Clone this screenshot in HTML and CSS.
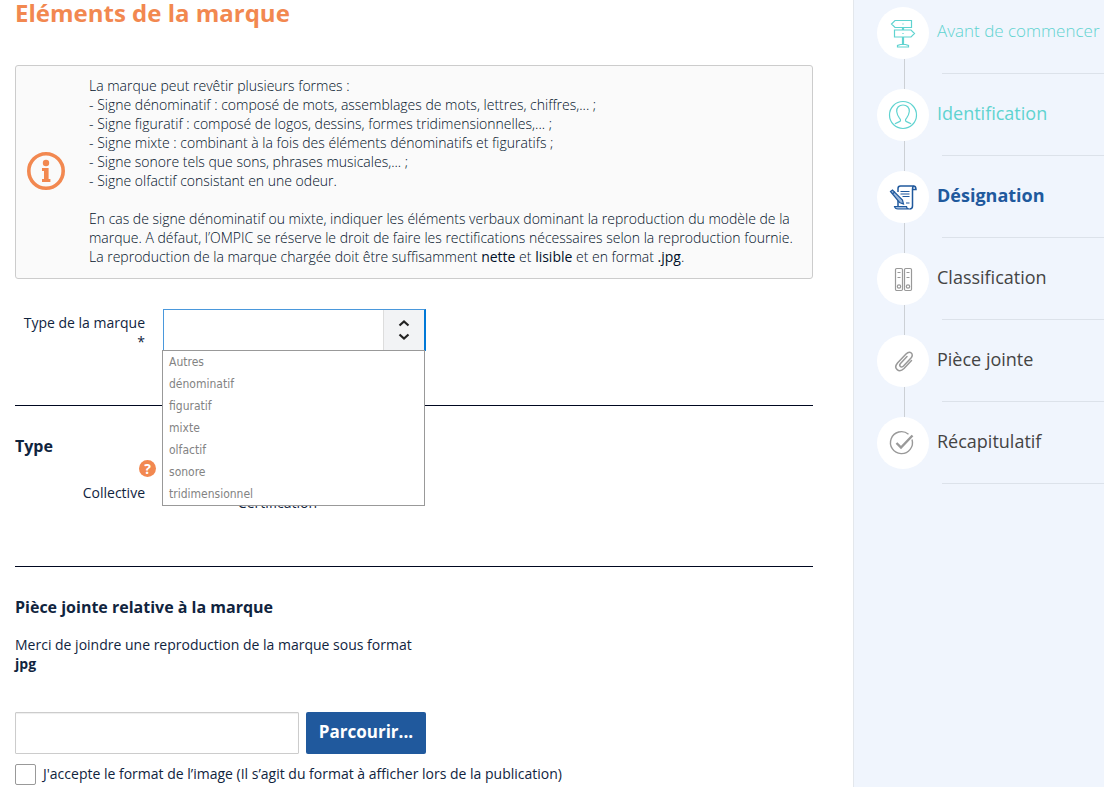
FILE: index.html
```html
<!DOCTYPE html>
<html lang="fr">
<head>
    <meta charset="utf-8">
    <meta name="viewport" content="width=device-width, initial-scale=1">
    <title>Eléments de la marque</title>
    <link rel="stylesheet" href="styles.css">
</head>
<body>
<div class="page">
    <main class="content">
        <h1>Eléments de la marque</h1>

        <div class="info">
            <svg class="info-icon" viewBox="0 0 38 38" aria-hidden="true">
                <circle cx="19" cy="19" r="17.2" fill="none" stroke="#f28850" stroke-width="3.6"/>
                <circle cx="19" cy="11" r="3.2" fill="#f28850"/>
                <path d="M15 16h6.600v11H23.400v3H15v-3h2v-8h-2z" fill="#f28850"/>
            </svg>
            <p>
                La marque peut revêtir plusieurs formes :<br>
                - Signe dénominatif : composé de mots, assemblages de mots, lettres, chiffres,... ;<br>
                - Signe figuratif : composé de logos, dessins, formes tridimensionnelles,... ;<br>
                - Signe mixte : combinant à la fois des éléments dénominatifs et figuratifs ;<br>
                - Signe sonore tels que sons, phrases musicales,... ;<br>
                - Signe olfactif consistant en une odeur.<br>
                <br>
                En cas de signe dénominatif ou mixte, indiquer les éléments verbaux dominant la reproduction du modèle de la marque. A défaut, l’OMPIC se réserve le droit de faire les rectifications nécessaires selon la reproduction fournie.<br>
                La reproduction de la marque chargée doit être suffisamment <strong>nette</strong> et <strong>lisible</strong> et en format <strong>.jpg</strong>.
            </p>
        </div>

        <form>
            <div class="field">
                <label class="field-label" for="type-marque">Type de la marque *</label>
                <div class="combo">
                    <select id="type-marque" class="combo-select">
                        <option value=""></option>
                        <option>Autres</option>
                        <option>dénominatif</option>
                        <option>figuratif</option>
                        <option>mixte</option>
                        <option>olfactif</option>
                        <option>sonore</option>
                        <option>tridimensionnel</option>
                    </select>
                    <span class="combo-arrows">
                        <svg width="12" height="22" viewBox="0 0 12 22" fill="none" stroke="#222" stroke-width="2.200" aria-hidden="true">
                            <path d="M1.500 6.500 6 2.500l4.500 4M1.500 15.500l4.500 4 4.500-4"/>
                        </svg>
                    </span>
                    <ul class="combo-list">
                        <li>Autres</li>
                        <li>dénominatif</li>
                        <li>figuratif</li>
                        <li>mixte</li>
                        <li>olfactif</li>
                        <li>sonore</li>
                        <li>tridimensionnel</li>
                    </ul>
                </div>
            </div>

            <section class="block">
                <h2>Type</h2>
                <div class="help-row"><button type="button" class="help" aria-label="Aide">?</button></div>
                <div class="radios">
                    <label class="field-label" for="collective">Collective</label>
                    <input type="radio" name="type" id="collective">
                    <label class="field-label field-label-low" for="certification">Certification</label>
                    <input type="radio" name="type" id="certification">
                </div>
            </section>

            <section class="block">
                <h2>Pièce jointe relative à la marque</h2>
                <p class="hint">Merci de joindre une reproduction de la marque sous format <strong>jpg</strong></p>
                <div class="upload">
                    <input type="text" class="upload-name" aria-label="Fichier">
                    <button type="button" class="upload-button">Parcourir...</button>
                </div>
                <label class="accept">
                    <input type="checkbox">
                    J'accepte le format de l’image (Il s’agit du format à afficher lors de la publication)
                </label>
            </section>
        </form>
    </main>

    <nav class="sidebar">
        <ol class="steps">
            <li class="step done">
                <span class="step-icon">
                    <svg viewBox="0 0 30 30" aria-hidden="true">
                        <path d="M7 2.500h16.500v7H7L3.500 6zM6.500 12H23l3.500 3.500L23 19H6.500z"/>
                        <path d="M14.500 9.500V12M15.500 9.500V12M14.500 19v7M15.500 19v7M9.500 29v-1.500l3-1h5l3 1V29z"/>
                        <path d="M14 6h2M14 15.500h2" opacity=".6"/>
                    </svg>
                </span>
                <a class="long" href="#avant">Avant de commencer</a>
            </li>
            <li class="step done">
                <span class="step-icon">
                    <svg viewBox="0 0 30 30" aria-hidden="true">
                        <circle cx="15" cy="15" r="13.500"/>
                        <path d="M7 24c1-1.500 5-1.800 5.500-3.200.2-1-.3-2-1.200-3C10 16 9 14 8.700 11.500 8.500 7.500 11 5 15 5s6.500 2.500 6.300 6.500C21 14 20 16 18.700 17.800c-.9 1-1.400 2-1.200 3 .5 1.400 4.500 1.700 5.500 3.200"/>
                    </svg>
                </span>
                <a href="#identification">Identification</a>
            </li>
            <li class="step current">
                <span class="step-icon">
                    <svg viewBox="0 0 30 30" aria-hidden="true">
                        <path d="M10 10V6.500Q10 4 12.500 4h13q2.500 0 2.500 3.500h-3.500M24.500 7.500Q24.500 4.500 26 4M24.500 7.500v16.500q0 3-3 3M10 17v7" stroke-width="1.500"/>
                        <path d="M6.500 24.500h12q0 2.500 3 2.500H10q-3 0-3.500-2.500z" fill="#9db9dc"/>
                        <path d="M12.500 9.500h9M12.500 12h9M14.500 14.500h7M18 21h3.500"/>
                        <path d="M2.500 9.500 4.500 8l10 10 1 4-4-1.500zM4.500 12l2.500-2.500" fill="#9db9dc"/>
                    </svg>
                </span>
                <a href="#designation" aria-current="step">Désignation</a>
            </li>
            <li class="step">
                <span class="step-icon">
                    <svg viewBox="0 0 30 30" aria-hidden="true">
                        <rect x="7.500" y="4.500" width="7" height="22" rx="1.200"/>
                        <rect x="16.500" y="4.500" width="7" height="22" rx="1.200"/>
                        <path d="M9.500 8.500h3M9.500 13.500h3M18.500 8.500h3M18.500 13.500h3"/>
                        <circle cx="11" cy="22.500" r="1.700"/>
                        <circle cx="20" cy="22.500" r="1.700"/>
                    </svg>
                </span>
                <a href="#classification">Classification</a>
            </li>
            <li class="step">
                <span class="step-icon">
                    <svg viewBox="0 0 30 30" aria-hidden="true">
                        <path d="M23.500 14.500l-7.500 8c-5 5-11 0-6.500-5.500l8.500-9c4-4 8.500 0 5 4l-7.500 8c-2.500 2.500-5-.5-3-2.500l6.500-7" stroke-width="1.500" stroke-linecap="round"/>
                    </svg>
                </span>
                <a href="#piece">Pièce jointe</a>
            </li>
            <li class="step">
                <span class="step-icon">
                    <svg viewBox="0 0 30 30" aria-hidden="true">
                        <path d="M20.500 6.200A11 11 0 1 0 24 11.500" stroke-width="1.400"/>
                        <path d="M8.500 15l4.500 4.500L24.500 7.500" stroke-width="2.400"/>
                    </svg>
                </span>
                <a href="#recap">Récapitulatif</a>
            </li>
        </ol>
    </nav>
</div>
</body>
</html>
```
FILE: styles.css
```css
* {
    box-sizing: border-box;
}

body {
    margin: 0;
    font: 14px/19px "Open Sans", "Noto Sans", sans-serif;
    color: #10243e;
    background: #fff;
}

h1, h2, p, ul, ol {
    margin: 0;
    padding: 0;
}

ul, ol {
    list-style: none;
}

.page {
    display: flex;
    min-height: 100vh;
}

.content {
    flex: 1;
    padding: 0 40px 0 15px;
}

h1 {
    margin-bottom: 39px;
    font-size: 24px;
    line-height: 26px;
    color: #f28850;
}

h2 {
    font-size: 16px;
    line-height: 20px;
}

/* info box */
.info {
    display: flex;
    align-items: center;
    gap: 24px;
    padding: 10px 11px 12px;
    border: 1px solid #ccc;
    border-radius: 3px;
    background: #fafafa;
    font-weight: 300;
    color: #001028;
}

.info-icon {
    flex: none;
    width: 38px;
    height: 38px;
}

.info strong {
    font-weight: 400;
}

/* form */
.field {
    display: flex;
    gap: 18px;
    height: 96px;
    margin-top: 30px;
}

.field-label {
    width: 130px;
    text-align: right;
}

.field .field-label {
    padding-top: 4px;
}

.combo {
    position: relative;
    display: flex;
    width: 263px;
    height: 42px;
    border: 1px solid #4a98dc;
    border-right: 2px solid #0078d7;
}

.combo-select {
    flex: 1;
    border: 0;
    padding: 0 8px;
    background: #fff;
    font: inherit;
    appearance: none;
    outline: none;
}

.combo-arrows {
    display: flex;
    align-items: center;
    justify-content: center;
    width: 41px;
    border-left: 1px solid #ddd;
    background: #f2f3f5;
}

.combo-list {
    position: absolute;
    top: 40px;
    left: -2px;
    z-index: 1;
    width: 263px;
    padding: 0 6px;
    border: 1px solid #999;
    background: #fff;
    font: 12px/22px Tahoma, "DejaVu Sans Condensed", sans-serif;
    color: #838383;
}

.block {
    border-top: 1px solid #000820;
    padding-top: 30px;
}

.block + .block {
    margin-top: 54px;
}

.help-row {
    display: flex;
    justify-content: flex-end;
    width: 141px;
    margin-top: 4px;
}

.help {
    width: 17px;
    height: 17px;
    padding: 0;
    border: 0;
    border-radius: 50%;
    background: #f28850;
    color: #fff;
    font: bold 14px/17px "Open Sans", sans-serif;
}

.radios {
    display: flex;
    gap: 18px;
    margin-top: 6px;
}

.radios input {
    width: 14px;
    height: 14px;
    margin: 0;
}

.radios .field-label-low {
    width: 122px;
    padding-top: 10px;
}

.hint {
    max-width: 411px;
    margin: 18px 0 39px;
}

.upload {
    display: flex;
    gap: 7px;
}

.upload-name {
    width: 284px;
    height: 42px;
    border: 1px solid #ccc;
    border-radius: 1px;
    box-shadow: inset 0 1px 1px #eee;
    font: inherit;
}

.upload-button {
    width: 120px;
    height: 42px;
    padding: 0 0 2px;
    border: 0;
    border-radius: 2px;
    background: #20599d;
    color: #fff;
    font: bold 17px/20px "Open Sans", sans-serif;
}

.accept {
    display: flex;
    gap: 7px;
    margin-top: 10px;
}

.accept input {
    width: 21px;
    height: 21px;
    margin: 0;
    border: 1px solid #999;
    border-radius: 2px;
    background: #fff;
    appearance: none;
}

/* steps */
.sidebar {
    width: 251px;
    padding: 7px 0 0 23px;
    border-left: 1px solid #e3e7ec;
    background: #f0f5fd;
}

.step {
    display: grid;
    grid-template-columns: 52px 1fr;
    grid-template-rows: 52px 30px;
    column-gap: 8px;
    font-size: 18px;
    color: #999;
}

.step::before,
.step::after {
    content: "";
    grid-row: 2;
}

.step::before {
    grid-column: 1;
    width: 1px;
    margin-left: 27px;
    background: #ccd0d5;
}

.step:last-child::before {
    background: none;
}

.step::after {
    grid-column: 2;
    height: 1px;
    margin: 14px 0 0 5px;
    background: #dce2ea;
}

.step-icon {
    display: flex;
    align-items: center;
    justify-content: center;
    border-radius: 50%;
    background: #fff;
}

.step-icon svg {
    width: 30px;
    height: 30px;
    fill: none;
    stroke: currentColor;
    stroke-width: 1.2;
}

.step a {
    align-self: center;
    padding-bottom: 4px;
    line-height: 24px;
    color: #444;
    text-decoration: none;
    white-space: nowrap;
}

.done,
.done a {
    color: #5fd3d0;
}

.step .long {
    font-size: 17px;
    font-weight: 300;
}

.current,
.current a {
    color: #20599d;
}

.step.current a {
    font-weight: bold;
    color: #20599d;
}

.step.done a {
    color: #5fd3d0;
}
```
